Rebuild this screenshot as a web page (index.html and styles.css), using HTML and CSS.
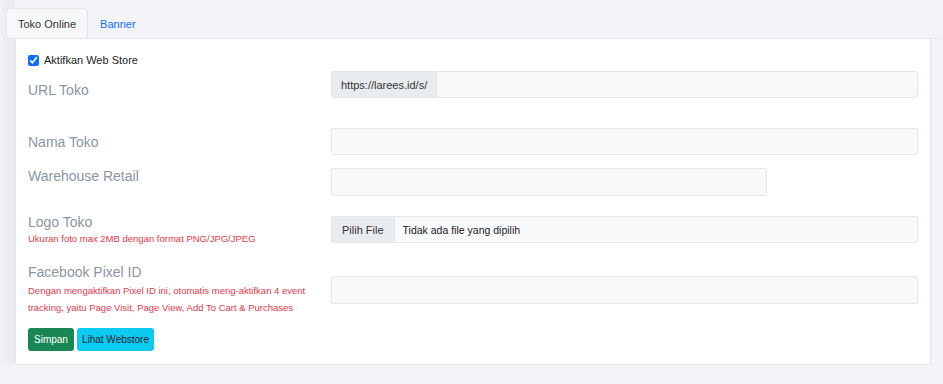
FILE: index.html
```html
<!DOCTYPE html>
<html lang="en">
<head>
  <meta charset="UTF-8">
  <meta name="viewport" content="width=device-width, initial-scale=1.0">
  <title>Pengaturan Toko Online</title>
  <link rel="stylesheet" href="styles.css">
</head>
<body>
  <div class="page">
    <!-- Tabs -->
    <ul class="tabs">
      <li class="tab active">Toko Online</li>
      <li class="tab">Banner</li>
    </ul>

    <!-- Tab content -->
    <div class="card">
      <label class="check-row">
        <input type="checkbox" checked>
        <span>Aktifkan Web Store</span>
      </label>

      <div class="field field-url">
        <div class="label">URL Toko</div>
        <div class="input-group">
          <span class="addon">https://larees.id/s/</span>
          <span class="input grow"></span>
        </div>
      </div>

      <div class="field field-nama">
        <div class="label">Nama Toko</div>
        <span class="input"></span>
      </div>

      <div class="field field-warehouse">
        <div class="label">Warehouse Retail</div>
        <span class="input input-short"></span>
      </div>

      <div class="field field-logo">
        <div class="label">
          Logo Toko
          <small class="hint">Ukuran foto max 2MB dengan format PNG/JPG/JPEG</small>
        </div>
        <div class="input-group">
          <span class="addon file-btn">Pilih File</span>
          <span class="input grow file-name">Tidak ada file yang dipilih</span>
        </div>
      </div>

      <div class="field field-pixel">
        <div class="label">
          Facebook Pixel ID
          <small class="hint hint-long">Dengan mengaktifkan Pixel ID ini, otomatis meng-aktifkan 4 event tracking, yaitu Page Visit, Page View, Add To Cart &amp; Purchases</small>
        </div>
        <span class="input"></span>
      </div>

      <div class="actions">
        <button class="btn btn-save">Simpan</button>
        <button class="btn btn-view">Lihat Webstore</button>
      </div>
    </div>
  </div>
</body>
</html>
```

FILE: styles.css
```css
body {
  margin: 0;
  font-family: "Liberation Sans", Arial, sans-serif;
  background-color: #f3f4f8;
  color: #212529;
}

.page {
  padding: 8px 3px 0 6px;
  background: linear-gradient(to right, #f0f1f4 0, #e9ebef 14px, #f3f4f8 15px);
}

/* Tabs */
.tabs {
  display: flex;
  list-style: none;
  margin: 0;
  padding: 0;
  border-bottom: 1px solid #e2e5ea;
  height: 30px;
}

.tab {
  padding: 0 11px;
  line-height: 30px;
  font-size: 11px;
  color: #0d6efd;
  border: 1px solid transparent;
  border-bottom: none;
  border-top-left-radius: 4px;
  border-top-right-radius: 4px;
}

.tab.active {
  color: #333;
  background-color: #f7f8fa;
  border-color: #e2e5ea;
}

/* Card */
.card {
  margin: 0 9px 0 9px;
  padding: 11px 12px 13px 12px;
  background-color: #ffffff;
  border: 1px solid #e2e5e9;
  border-top: none;
  border-radius: 0 0 3px 3px;
  box-shadow: 0 1px 2px rgba(0, 0, 0, 0.03);
}

.check-row {
  display: flex;
  align-items: center;
  gap: 5px;
  height: 20px;
  font-size: 11px;
  color: #222;
}

.check-row input {
  width: 11px;
  height: 11px;
  margin: 0;
  accent-color: #0d6efd;
}

/* Form rows */
.field {
  display: grid;
  grid-template-columns: 291px 1fr;
  column-gap: 12px;
  align-items: start;
}

.label {
  font-size: 14px;
  line-height: 20px;
  color: #8a96a3;
}

.hint {
  display: block;
  font-size: 9.5px;
  line-height: 14px;
  color: #e0394a;
}

.hint-long {
  line-height: 17px;
}

.input {
  display: block;
  height: 27px;
  box-sizing: border-box;
  background-color: #f8f9fb;
  border: 1px solid #e2e5e9;
  border-radius: 3px;
}

.input-short {
  width: 436px;
  height: 28px;
}

.input-group {
  display: flex;
  height: 27px;
}

.addon {
  display: flex;
  align-items: center;
  padding: 0 9px;
  font-size: 11px;
  color: #333;
  background-color: #e9ecef;
  border: 1px solid #e2e5e9;
  border-right: none;
  border-radius: 3px 0 0 3px;
}

.input.grow {
  flex: 1;
  height: 27px;
  border-radius: 0 3px 3px 0;
}

.file-btn {
  padding: 0 10px;
}

.file-name {
  display: flex;
  align-items: center;
  padding-left: 8px;
  font-size: 10.5px;
  color: #222;
}

/* Row offsets */
.field-url { margin-top: 1px; }
.field-url .label { padding-top: 9px; }

.field-nama { margin-top: 28px; }
.field-nama .label { padding-top: 4px; }

.field-warehouse { margin-top: 11px; }
.field-warehouse .input { margin-top: 2px; }

.field-logo { margin-top: 16px; }
.field-logo .input-group { margin-top: 4px; }

.field-pixel { margin-top: 16px; }
.field-pixel > .input { margin-top: 14px; height: 28px; }

/* Buttons */
.actions {
  display: flex;
  gap: 3px;
  margin-top: 12px;
}

.btn {
  height: 23px;
  padding: 0 6px;
  font-family: inherit;
  font-size: 10px;
  border: none;
  border-radius: 3px;
  cursor: pointer;
}

.btn-save {
  color: #fff;
  background-color: #198754;
}

.btn-view {
  padding: 0 5px;
  color: #0b2530;
  background-color: #0dcaf0;
}
```
